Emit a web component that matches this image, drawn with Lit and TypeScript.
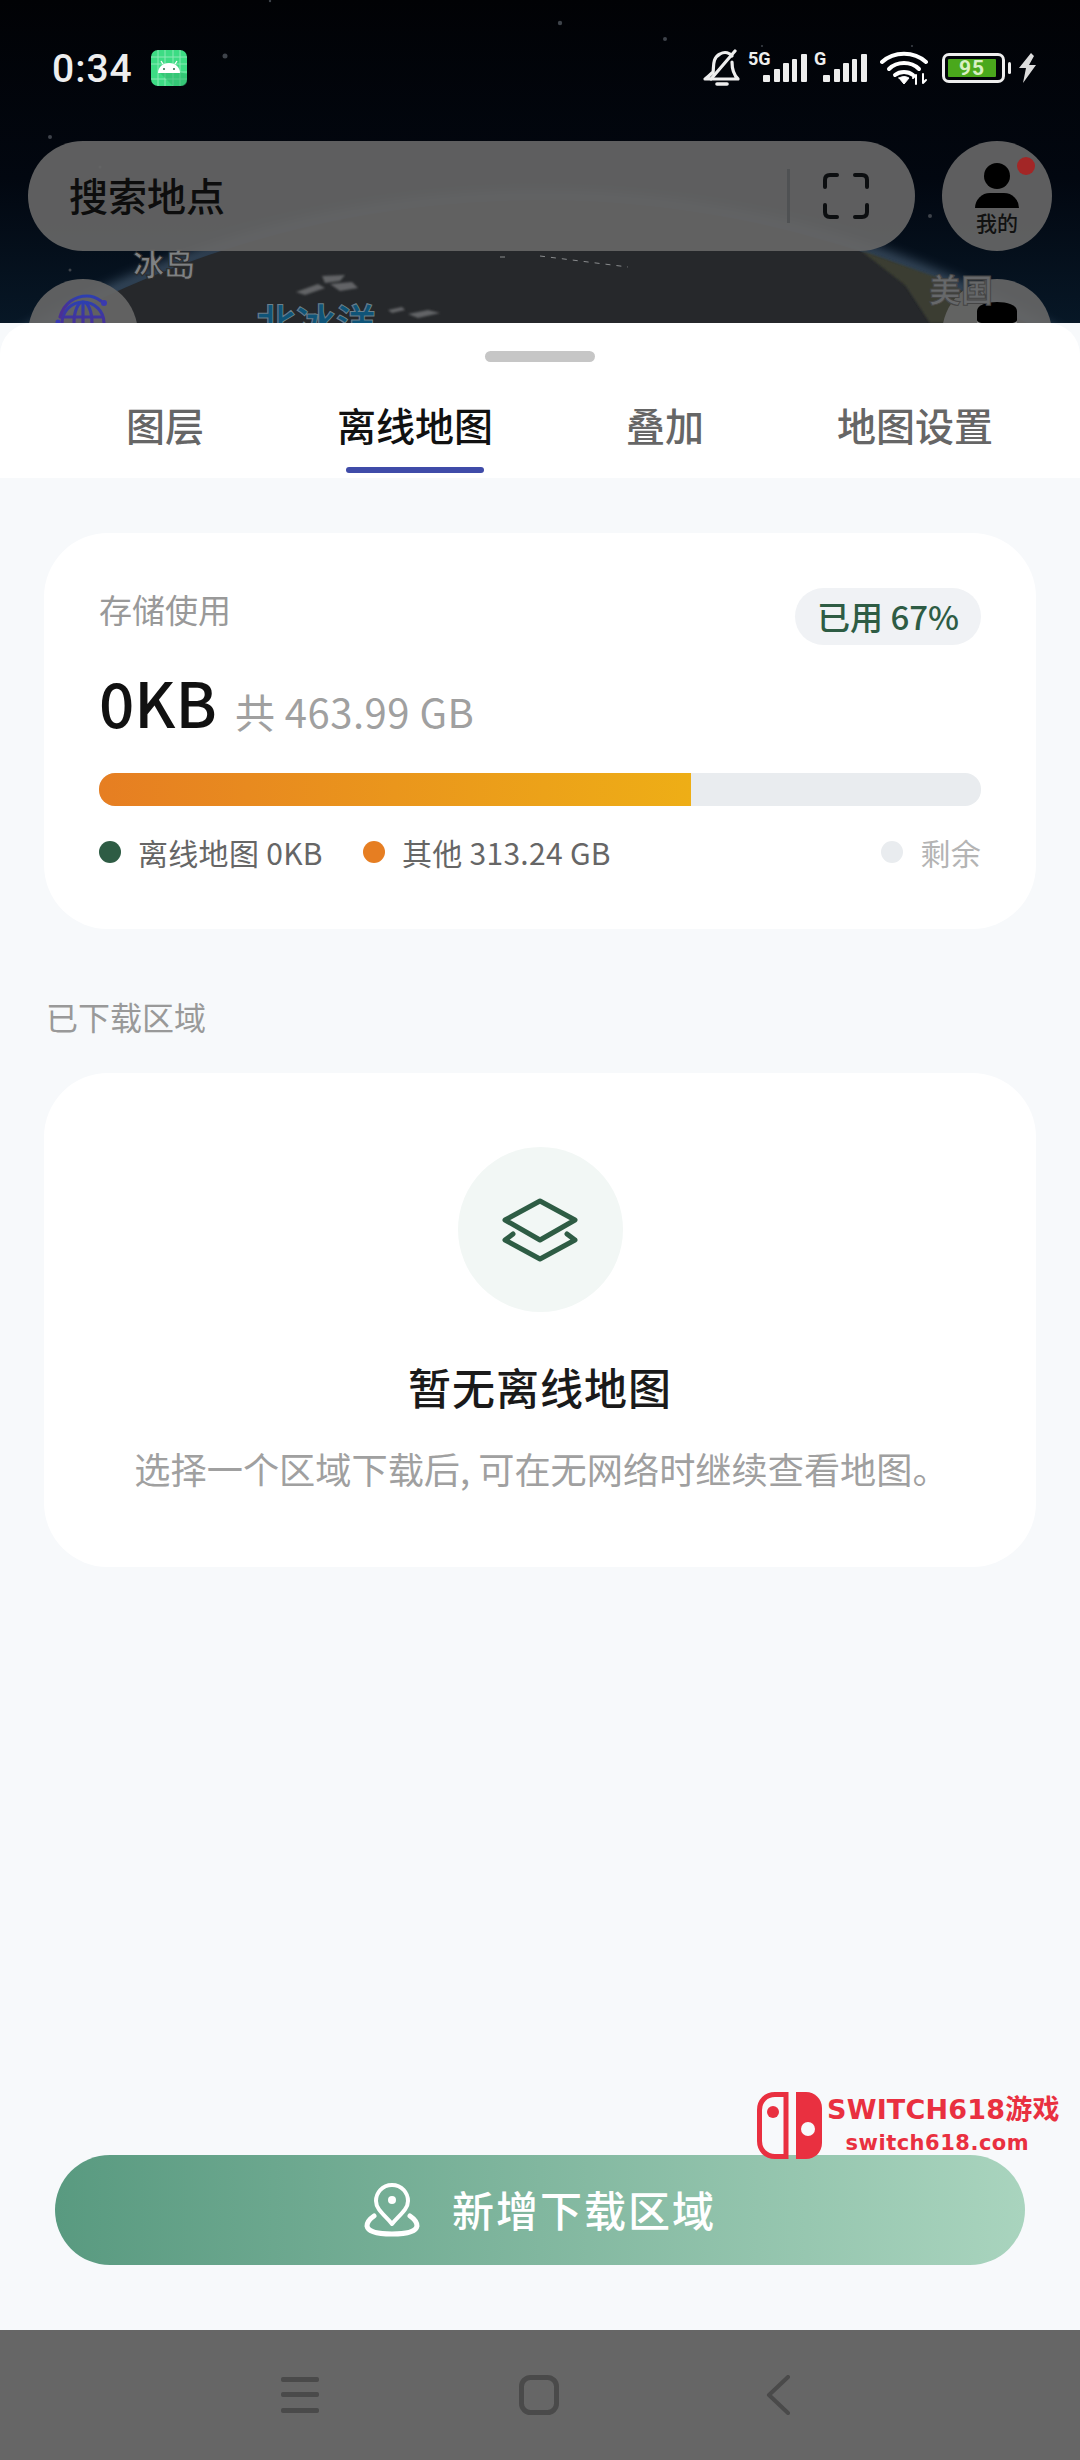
import { LitElement, html, css, svg } from 'lit';
import { customElement, state } from 'lit/decorators.js';

const tabs = ['图层', '离线地图', '叠加', '地图设置'];
const stars: [number, number, number][] = [
  [270, 1, 1.2], [225, 56, 2.5], [50, 137, 2], [560, 23, 2.2], [665, 39, 2], [930, 216, 2],
  [762, 46, 1], [912, 46, 1], [100, 167, 1.5], [70, 270, 1.5], [210, 275, 1],
];

const mapLayer = svg`
  <svg class="map" width="1080" height="323" viewBox="0 0 1080 323">
    <defs>
      <linearGradient id="sky" x1="0" y1="0" x2="0" y2="1">
        <stop offset="0" stop-color="#010205" />
        <stop offset="0.55" stop-color="#020710" />
        <stop offset="1" stop-color="#071726" />
      </linearGradient>
      <filter id="blur"><feGaussianBlur stdDeviation="7" /></filter>
      <filter id="soft"><feGaussianBlur stdDeviation="1" /></filter>
    </defs>
    <rect width="1080" height="323" fill="url(#sky)" />
    ${stars.map(([x, y, r]) => svg`<circle cx=${x} cy=${y} r=${r} fill="#3e434a" />`)}
    <circle cx="540" cy="1225" r="1027" fill="none" stroke="#9cbcdc" stroke-width="8" opacity="0.6" filter="url(#blur)" />
    <circle cx="540" cy="1225" r="1025" fill="#26282b" />
    <path d="M860 250 L950 282 L1000 323 L930 323 L905 285 Z" fill="#3b3e33" filter="url(#soft)" />
    <g fill="#626466" filter="url(#soft)">
      <path d="M322 276 L345 275 L340 281 L325 283 Z" />
      <path d="M296 292 L318 284 L325 288 L305 295 Z" />
      <path d="M330 284 L352 282 L358 288 L340 291 Z" />
      <path d="M388 310 L402 307 L405 310 L392 313 Z" />
      <path d="M408 314 L428 310 L440 313 L418 318 Z" />
    </g>
    <path d="M500 257 L508 257 M540 256 L628 267" stroke="#8a8c8e" stroke-width="1" stroke-dasharray="5 6" />
  </svg>
`;

const androidIcon = svg`
  <svg width="36" height="36" viewBox="0 0 36 36">
    <rect width="36" height="36" rx="7" fill="#3ddc84" />
    <path d="M7 0V36M14 0V36M22 0V36M29 0V36M0 7H36M0 14H36M22 22H36M0 29H36" stroke="#8beab5" stroke-width="1" />
    <path d="M8 22 L22 36 H30 Q36 36 36 30 V24 L28 22 Z" fill="#2fb56c" opacity="0.55" />
    <path d="M7 23 C7 17 12 13 18 13 C24 13 29 17 29 23 Z" fill="#fff" />
    <path d="M12 14 L10 11 M24 14 L26 11" stroke="#fff" stroke-width="1.3" />
    <circle cx="13" cy="19" r="1" fill="#2a6b48" /><circle cx="23" cy="19" r="1" fill="#2a6b48" />
  </svg>
`;

const bellOff = svg`
  <svg width="38" height="38" viewBox="0 0 38 38" fill="none" stroke="#eee" stroke-width="3.2" stroke-linecap="round" stroke-linejoin="round">
    <path d="M10 24 C11 18 9 9 17 5 C22 2 27 4 29 7" />
    <path d="M29 13 C29 20 31 26 35 30 H2 C5 28 7 26 9 24" />
    <path d="M32 2 L8 30" />
    <path d="M14 35 H24" stroke-width="3.6" />
  </svg>
`;

const signal = svg`
  <svg width="44" height="28" viewBox="0 0 44 28" fill="#eee">
    <rect x="0" y="21" width="7" height="7" rx="1" />
    <rect x="11" y="15" width="6" height="13" rx="1" />
    <rect x="20" y="9" width="6" height="19" rx="1" />
    <rect x="29" y="5" width="5" height="23" rx="1" />
    <rect x="38" y="0" width="6" height="28" rx="1" />
  </svg>
`;

const wifi = svg`
  <svg width="48" height="34" viewBox="0 0 48 34" fill="none" stroke="#fff" stroke-width="4" stroke-linecap="round">
    <path d="M2 11 C14 0 34 0 46 11" />
    <path d="M9 18 C17 10 31 10 39 18" />
    <path d="M15 24 C20 20 28 20 33 24" />
    <path d="M19 27 L24 33 L29 27 Q24 24 19 27 Z" fill="#fff" stroke-width="1" />
    <path d="M36 33 V24 M36 24 L33 27 M43 23 V32 M43 32 L46 29" stroke-width="2" />
  </svg>
`;

const bolt = svg`
  <svg width="19" height="30" viewBox="0 0 19 30"><path d="M13 0 L1 15 L8 15 L5 30 L18 12 L11 12 L16 3 Z" fill="#ddd" /></svg>
`;

const scanIcon = svg`
  <svg width="46" height="46" viewBox="0 0 46 46" fill="none" stroke="#0c0e10" stroke-width="4" stroke-linecap="round" stroke-linejoin="round">
    <path d="M14 2 H7 Q2 2 2 7 V14 M32 2 H39 Q44 2 44 7 V14 M2 32 V39 Q2 44 7 44 H14 M44 32 V39 Q44 44 39 44 H32" />
  </svg>
`;

const globe = svg`
  <svg width="56" height="56" viewBox="0 0 56 56" fill="none">
    <defs>
      <linearGradient id="globe" x1="0" y1="0" x2="0" y2="0.55">
        <stop offset="0" stop-color="#2d3fb0" />
        <stop offset="1" stop-color="#4a2f95" />
      </linearGradient>
    </defs>
    <g stroke="url(#globe)" stroke-width="3.2">
      <circle cx="28" cy="30" r="21" />
      <ellipse cx="28" cy="30" rx="9" ry="21" />
      <path d="M28 9 V51 M7 24 H49" />
      <path d="M5 24 C9 10 20 3 32 3 C38 3 42 5 46 8" stroke-linecap="round" />
    </g>
    <circle cx="49" cy="10" r="3" fill="#3a3ab0" />
    <circle cx="3" cy="29" r="2.5" fill="#3a3ab0" />
  </svg>
`;

const dbIcon = svg`
  <svg width="40" height="40" viewBox="0 0 40 40">
    <path d="M0 9 C0 -3 40 -3 40 9 V18 C40 24 0 24 0 18 Z" fill="#000" />
    <path d="M0 20 C4 25 36 25 40 20" fill="none" stroke="#8a8a8a" stroke-width="1.5" />
    <path d="M0 23 C6 27 34 27 40 23 V40 H0 Z" fill="#000" />
  </svg>
`;

const layersIcon = svg`
  <svg width="76" height="64" viewBox="0 0 76 64" fill="none" stroke="#2e5c44" stroke-width="5" stroke-linejoin="round" stroke-linecap="round">
    <path d="M38 3 L73 22 L38 42 L3 22 Z" />
    <path d="M11 36 L3 42 L38 61 L73 42 L65 36" />
  </svg>
`;

const pinIcon = svg`
  <svg width="56" height="54" viewBox="0 0 56 54" fill="none" stroke="#fff" stroke-linejoin="round" stroke-linecap="round">
    <path d="M28 2 C18 2 12 10 12 18 C12 27 22 33 28 41 C34 33 44 27 44 18 C44 10 38 2 28 2 Z" stroke-width="4" />
    <circle cx="28" cy="17" r="4" fill="#fff" stroke="none" />
    <path d="M10 33 C4 37 3 41 3 43 C4 49 14 51 28 51 C42 51 52 49 53 43 C53 41 52 37 46 33" stroke-width="5" />
  </svg>
`;

const switchLogo = svg`
  <svg width="65" height="67" viewBox="0 0 65 67">
    <path d="M29 2.5 H18 C9 2.5 2.5 9 2.5 18 V49 C2.5 58 9 64.5 18 64.5 H29 Z" fill="none" stroke="#e93040" stroke-width="5" />
    <circle cx="16" cy="20" r="6" fill="#e93040" />
    <path d="M39 0 H49 C58 0 65 7 65 16 V51 C65 60 58 67 49 67 H39 Z" fill="#e93040" />
    <circle cx="51" cy="37" r="7" fill="#f7f9fb" />
  </svg>
`;

@customElement('app-root')
export class AppRoot extends LitElement {
  @state()
  active = 1;

  static styles = css`
    :host {
      display: flex;
      flex-direction: column;
      position: relative;
      width: 1080px;
      height: 2460px;
      overflow: hidden;
      font-family: 'Noto Sans CJK SC', 'Noto Sans', sans-serif;
      background: #f7f9fb;
    }

    /* map behind the search bar */
    .top {
      position: relative;
      height: 323px;
      flex: none;
      overflow: hidden;
    }
    .map {
      position: absolute;
      left: 0;
      top: 0;
    }
    .place {
      position: absolute;
      font-weight: 700;
      line-height: 1;
    }
    .iceland {
      left: 133px;
      top: 247px;
      font-size: 31px;
      color: #7f8183;
      -webkit-text-stroke: 1px #2a2a2a;
    }
    .usa {
      left: 929px;
      top: 272px;
      font-size: 32px;
      color: #66686a;
      -webkit-text-stroke: 1px #454545;
    }
    .ocean {
      left: 256px;
      top: 301px;
      font-size: 40px;
      color: #0f5478;
      -webkit-text-stroke: 1px #6b7f8a;
    }
    .status {
      position: relative;
      height: 141px;
      box-sizing: border-box;
      padding: 50px 43px 0 52px;
      display: flex;
      align-items: flex-start;
      color: #eee;
    }
    .time {
      font-size: 39px;
      font-weight: 500;
      line-height: 38px;
      letter-spacing: 1px;
      width: 99px;
      font-family: Roboto, sans-serif;
    }
    .status-right {
      margin-left: auto;
      display: flex;
      align-items: center;
      height: 36px;
    }
    .net {
      position: relative;
      display: flex;
      justify-content: flex-end;
      align-items: flex-end;
      height: 28px;
      margin-left: 7px;
    }
    .net span {
      position: absolute;
      top: -4px;
      left: 0;
      font: 700 18px/18px Roboto, sans-serif;
      color: #eee;
    }
    .net.five {
      width: 59px;
    }
    .net.g {
      width: 53px;
    }
    .wifi {
      margin-left: 13px;
      display: flex;
    }
    .battery {
      box-sizing: border-box;
      width: 63px;
      height: 30px;
      margin-left: 14px;
      padding: 3px;
      border: 3px solid #eee;
      border-radius: 7px;
      display: flex;
    }
    .battery div {
      flex: 1;
      background: #4aa81c;
      margin-right: 3px;
      border-radius: 1px;
      color: #d8f0c4;
      font: 700 21px/18px Roboto, sans-serif;
      text-align: center;
      letter-spacing: 1px;
    }
    .nub {
      width: 3px;
      height: 12px;
      margin: 0 7px 0 3px;
      background: #eee;
      border-radius: 2px;
    }
    .search-row {
      position: relative;
      display: flex;
      padding: 0 28px;
      gap: 27px;
    }
    .search {
      width: 887px;
      height: 110px;
      box-sizing: border-box;
      padding-left: 41px;
      border-radius: 55px;
      background: rgba(102, 102, 102, 0.92);
      display: flex;
      align-items: center;
      font-size: 39px;
      font-weight: 500;
      color: #0d0d0d;
    }
    .search .text {
      margin-top: -5px;
    }
    .search .divider {
      margin-left: auto;
      width: 3px;
      height: 54px;
      background: #4f5153;
    }
    .search .scan {
      display: flex;
      margin: 0 46px 0 33px;
    }
    .round {
      width: 110px;
      height: 110px;
      border-radius: 50%;
      background: rgba(102, 102, 102, 0.92);
      flex: none;
    }
    .me {
      position: relative;
      display: flex;
      flex-direction: column;
      align-items: center;
    }
    .me .head {
      width: 26px;
      height: 26px;
      margin-top: 22px;
      border-radius: 50%;
      background: #000;
    }
    .me .torso {
      width: 44px;
      height: 15px;
      margin-top: 4px;
      border-radius: 18px 18px 0 0;
      background: #000;
    }
    .me .name {
      margin-top: 2px;
      font-size: 21px;
      line-height: 24px;
      color: #111;
      font-weight: 500;
    }
    .me .dot {
      position: absolute;
      top: 16px;
      left: 75px;
      width: 18px;
      height: 18px;
      border-radius: 50%;
      background: #a32626;
    }
    .float {
      position: absolute;
      top: 279px;
      display: flex;
      justify-content: center;
    }
    .float.left {
      left: 28px;
    }
    .float.left svg {
      margin-top: 14px;
    }
    .float.right {
      left: 942px;
    }
    .float.right svg {
      margin-top: 23px;
    }

    /* sheet */
    .sheet {
      flex: 1;
      display: flex;
      flex-direction: column;
      min-height: 0;
    }
    .sheet-head {
      background: #fff;
      border-radius: 32px 32px 0 0;
      height: 155px;
      box-sizing: border-box;
      padding-top: 28px;
    }
    .handle {
      width: 110px;
      height: 11px;
      margin: 0 auto;
      border-radius: 6px;
      background: #c6c6c6;
    }
    .tabs {
      display: flex;
      padding: 0 40px;
      margin-top: 37px;
    }
    .tab {
      flex: 1;
      display: flex;
      flex-direction: column;
      align-items: center;
      font-size: 39px;
      line-height: 50px;
      font-weight: 500;
      color: #666;
    }
    .tab.on {
      color: #111;
    }
    .tab.on::after {
      content: '';
      width: 138px;
      height: 6px;
      margin-top: 18px;
      border-radius: 3px;
      background: #3f4ba8;
    }
    .content {
      flex: 1;
      display: flex;
      flex-direction: column;
      padding: 55px 44px 0;
    }
    .card {
      background: #fff;
      border-radius: 64px;
    }
    .storage {
      height: 396px;
      box-sizing: border-box;
      padding: 55px 55px 0;
    }
    .row {
      display: flex;
      justify-content: space-between;
      align-items: flex-start;
    }
    .label {
      font-size: 33px;
      line-height: 42px;
      color: #999;
    }
    .pill {
      height: 57px;
      width: 186px;
      border-radius: 29px;
      background: #f0f2f5;
      color: #2e5c44;
      font-size: 33px;
      font-weight: 500;
      line-height: 57px;
      text-align: center;
    }
    .amount {
      display: flex;
      align-items: baseline;
      gap: 18px;
      margin-top: 16px;
      line-height: 80px;
    }
    .amount b {
      font-size: 62px;
      font-weight: 500;
      color: #111;
    }
    .amount span {
      font-size: 40px;
      letter-spacing: 0.5px;
      color: #a0a0a0;
    }
    .bar {
      height: 33px;
      margin-top: 22px;
      border-radius: 16px;
      background: #e9ecef;
      overflow: hidden;
    }
    .bar div {
      height: 100%;
      background: linear-gradient(90deg, #e67e22, #eeae16);
    }
    .legend {
      display: flex;
      align-items: center;
      margin-top: 26px;
      font-size: 30px;
      letter-spacing: 0.3px;
      line-height: 40px;
      color: #666;
    }
    .legend i {
      width: 22px;
      height: 22px;
      border-radius: 50%;
      margin-right: 17px;
    }
    .legend .item {
      display: flex;
      align-items: center;
      margin-right: 40px;
    }
    .legend .rest {
      margin: 0 0 0 auto;
      color: #b4b4b4;
    }
    .section {
      margin: 64px 0 0 2px;
      font-size: 32px;
      line-height: 46px;
      color: #999;
    }
    .empty {
      height: 494px;
      margin-top: 34px;
      box-sizing: border-box;
      padding-top: 74px;
      display: flex;
      flex-direction: column;
      align-items: center;
    }
    .empty .disc {
      width: 165px;
      height: 165px;
      border-radius: 50%;
      background: #f2f7f5;
      display: flex;
      align-items: center;
      justify-content: center;
    }
    .empty h3 {
      margin: 44px 0 0;
      font-size: 43px;
      line-height: 60px;
      font-weight: 500;
      color: #1a1a1a;
      letter-spacing: 1px;
    }
    .empty p {
      margin: 27px 0 0 3px;
      font-size: 36.2px;
      line-height: 50px;
      color: #a0a0a0;
      white-space: nowrap;
    }
    .add {
      margin: auto 11px 65px;
      height: 110px;
      border-radius: 55px;
      background: linear-gradient(90deg, #599a80, #a9d4be);
      display: flex;
      align-items: center;
      justify-content: center;
      gap: 32px;
      color: #fff;
      font-size: 42px;
      font-weight: 500;
      letter-spacing: 2px;
    }
    .add svg {
      flex: none;
    }
    .add span {
      margin-top: -4px;
    }
    .nav {
      flex: none;
      height: 130px;
      background: #666;
      display: flex;
      align-items: flex-start;
      justify-content: center;
      padding: 45px 9px 0 0;
      box-sizing: border-box;
      gap: 200px;
    }
    .nav .back {
      margin-left: 7px;
    }
    .mark {
      position: absolute;
      left: 757px;
      top: 2092px;
      display: flex;
      gap: 5px;
    }
    .mark .lines {
      display: flex;
      flex-direction: column;
      align-items: center;
      color: #e93040;
      font-family: 'DejaVu Sans', 'Noto Sans CJK SC', sans-serif;
      font-weight: 700;
    }
    .mark .big {
      font-size: 27px;
      line-height: 30px;
      margin-top: 3px;
      letter-spacing: 0.2px;
      white-space: nowrap;
    }
    .mark .small {
      font-size: 21px;
      line-height: 22px;
      margin: 7px 0 0 -12px;
      letter-spacing: 0.5px;
    }
  `;

  render() {
    return html`
      <div class="top">
        ${mapLayer}
        <div class="place iceland">冰岛</div>
        <div class="place ocean">北冰洋</div>
        <div class="round float left">${globe}</div>
        <div class="round float right">${dbIcon}</div>
        <div class="place usa">美国</div>
        <div class="status">
          <div class="time">0:34</div>
          ${androidIcon}
          <div class="status-right">
            ${bellOff}
            <div class="net five"><span>5G</span>${signal}</div>
            <div class="net g"><span>G</span>${signal}</div>
            <div class="wifi">${wifi}</div>
            <div class="battery"><div>95</div></div>
            <div class="nub"></div>
            ${bolt}
          </div>
        </div>
        <div class="search-row">
          <div class="search">
            <span class="text">搜索地点</span>
            <div class="divider"></div>
            <div class="scan">${scanIcon}</div>
          </div>
          <div class="round me">
            <div class="head"></div>
            <div class="torso"></div>
            <div class="name">我的</div>
            <div class="dot"></div>
          </div>
        </div>
      </div>

      <div class="sheet">
        <div class="sheet-head">
          <div class="handle"></div>
          <div class="tabs">
            ${tabs.map((t, i) => html`<div class="tab ${i === this.active ? 'on' : ''}">${t}</div>`)}
          </div>
        </div>
        <div class="content">
          <div class="card storage">
            <div class="row">
              <div class="label">存储使用</div>
              <div class="pill">已用 67%</div>
            </div>
            <div class="amount"><b>0KB</b><span>共 463.99 GB</span></div>
            <div class="bar"><div style="width:67.1%"></div></div>
            <div class="legend">
              <div class="item"><i style="background:#2e5c44"></i>离线地图 0KB</div>
              <div class="item"><i style="background:#e67e22"></i>其他 313.24 GB</div>
              <div class="item rest"><i style="background:#e9ecef"></i>剩余</div>
            </div>
          </div>
          <div class="section">已下载区域</div>
          <div class="card empty">
            <div class="disc">${layersIcon}</div>
            <h3>暂无离线地图</h3>
            <p>选择一个区域下载后, 可在无网络时继续查看地图。</p>
          </div>
          <div class="add">${pinIcon}<span>新增下载区域</span></div>
        </div>
      </div>

      <div class="nav">
        <svg width="38" height="40" viewBox="0 0 38 40" fill="#4a4a4a">
          <rect y="2" width="38" height="5" rx="2" /><rect y="17" width="38" height="5" rx="2" /><rect y="33" width="38" height="5" rx="2" />
        </svg>
        <svg width="40" height="40" viewBox="0 0 40 40" fill="none" stroke="#4a4a4a" stroke-width="5">
          <rect x="2.5" y="2.5" width="35" height="35" rx="9" />
        </svg>
        <svg class="back" width="24" height="40" viewBox="0 0 24 40" fill="none" stroke="#4a4a4a" stroke-width="4" stroke-linecap="round" stroke-linejoin="round">
          <path d="M22 2 L3 20 L22 38" />
        </svg>
      </div>

      <div class="mark">
        ${switchLogo}
        <div class="lines">
          <div class="big">SWITCH618游戏</div>
          <div class="small">switch618.com</div>
        </div>
      </div>
    `;
  }
}
